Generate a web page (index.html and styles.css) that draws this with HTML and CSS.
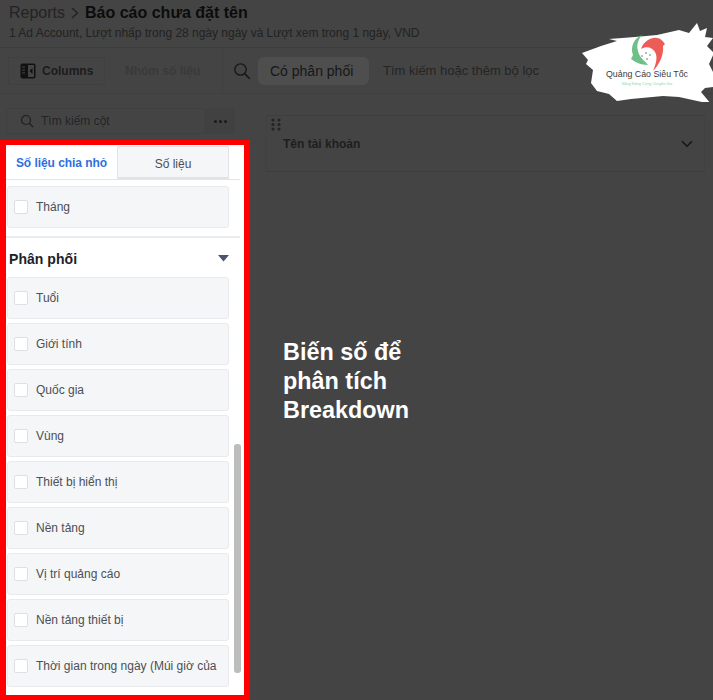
FILE: index.html
```html
<!DOCTYPE html>
<html lang="vi">
<head>
<meta charset="utf-8">
<title>Báo cáo chưa đặt tên</title>
<link rel="stylesheet" href="styles.css">
</head>
<body>
<div class="page">
  <header class="head">
    <div class="crumbs"><span class="crumb">Reports</span><svg class="sep" width="10" height="14" viewBox="0 0 10 14"><path d="M2 2l5.5 5L2 12" fill="none" stroke="#1f1f1f" stroke-width="1.2"/></svg><strong class="title">Báo cáo chưa đặt tên</strong></div>
    <div class="sub">1 Ad Account, Lượt nhấp trong 28 ngày ngày và Lượt xem trong 1 ngày, VND</div>
  </header>
  <div class="toolbar">
    <div class="btn btn-columns">
      <svg width="16" height="16" viewBox="0 0 16 16"><rect x="0.5" y="0.5" width="15" height="15" rx="2" fill="#111"/><rect x="8" y="2" width="6" height="12" fill="#444"/><path d="M12.5 5v6L9.5 8z" fill="#111"/><path d="M2 4h3M2 7h3M2 10h3" stroke="#444" stroke-width="1"/></svg>
      <span>Columns</span>
    </div>
    <div class="btn-muted">Nhóm số liệu</div>
    <div class="search-wrap">
      <svg width="18" height="18" viewBox="0 0 18 18"><circle cx="7.5" cy="7.5" r="5.7" fill="none" stroke="#161616" stroke-width="1.3"/><path d="M11.6 11.6l5.2 5.2" stroke="#161616" stroke-width="1.5"/></svg>
      <span class="chip">Có phân phối</span>
      <span class="filter">Tìm kiếm hoặc thêm bộ lọc</span>
    </div>
  </div>
  <div class="main">
    <aside class="side">
      <div class="side-search">
        <div class="search-box">
          <svg width="14" height="14" viewBox="0 0 14 14"><circle cx="6" cy="6" r="4.5" fill="none" stroke="#1e1e1e" stroke-width="1.2"/><path d="M9.3 9.3l3.8 3.8" stroke="#1e1e1e" stroke-width="1.3"/></svg>
          <span>Tìm kiếm cột</span>
        </div>
        <div class="more"><i></i><i></i><i></i></div>
      </div>
      <div class="panel">
        <div class="tabs">
          <div class="tab tab-on">Số liệu chia nhỏ</div>
          <div class="tab tab-off">Số liệu</div>
        </div>
        <div class="row first"><span class="check"></span>Tháng</div>
        <hr class="rule">
        <div class="group"><span>Phân phối</span><svg width="11" height="7" viewBox="0 0 11 7"><path d="M0 0h11L5.5 6.5z" fill="#4b5468"/></svg></div>
        <div class="rows">
          <div class="row"><span class="check"></span>Tuổi</div>
          <div class="row"><span class="check"></span>Giới tính</div>
          <div class="row"><span class="check"></span>Quốc gia</div>
          <div class="row"><span class="check"></span>Vùng</div>
          <div class="row"><span class="check"></span>Thiết bị hiển thị</div>
          <div class="row"><span class="check"></span>Nền tảng</div>
          <div class="row"><span class="check"></span>Vị trí quảng cáo</div>
          <div class="row"><span class="check"></span>Nền tảng thiết bị</div>
          <div class="row"><span class="check"></span>Thời gian trong ngày (Múi giờ của</div>
        </div>
        <div class="thumb"></div>
      </div>
    </aside>
    <section class="content">
      <div class="col-card">
        <svg class="grip" width="10" height="13" viewBox="0 0 10 13"><g fill="#242424"><circle cx="2" cy="2" r="1.6"/><circle cx="8" cy="2" r="1.6"/><circle cx="2" cy="6.5" r="1.6"/><circle cx="8" cy="6.5" r="1.6"/><circle cx="2" cy="11" r="1.6"/><circle cx="8" cy="11" r="1.6"/></g></svg>
        <div class="col-row">
          <span>Tên tài khoản</span>
          <svg width="12" height="8" viewBox="0 0 12 8"><path d="M1 1.2l5 5 5-5" fill="none" stroke="#161616" stroke-width="1.6"/></svg>
        </div>
      </div>
      <p class="note">Biến số để<br>phân tích<br>Breakdown</p>
    </section>
  </div>
  <svg class="logo" width="134" height="82" viewBox="0 0 134 82">
    <path d="M3 33L22 26 38 21 30 19 56 17 78 15 100 10 110 13 118 3 121 11 128 8 126 17 134 18 128 26 135 33 130 44 133 50 141 66 126 68 122 72 132 84 100 77 84 76 52 79 38 81 30 74 18 71 12 63 14 50 7 44 9 40z" fill="#fff"/>
    <path d="M63 15C55 18 51 27 54 35L52 39C56 42 62 45 69 45 66 41 62 39 60 34 57 27 58 21 63 15z" fill="#6cc088"/>
    <path d="M62 29C65 21 72 17 78 18 81 18 84 21 86 24L84 26C85 34 81 44 74 51 77 44 79 37 76 32 73 27 67 26 62 29z" fill="#ee5c58"/>
    <g fill="#a3a8a8"><circle cx="63" cy="36" r="1"/><circle cx="67" cy="33" r="1"/><circle cx="71" cy="35" r="1"/><circle cx="68" cy="39" r="1"/></g>
    <text class="logo-name" x="68" y="57" text-anchor="middle">Quảng Cáo Siêu Tốc</text>
    <text class="logo-tag" x="68" y="65" text-anchor="middle">Năng Động Cùng Chuyên Gia</text>
  </svg>
</div>
</body>
</html>
```
FILE: styles.css
```css
* { box-sizing: border-box; }
html, body { margin: 0; padding: 0; }
body { background: #444; font-family: "Liberation Sans", Arial, sans-serif; color: #1d1d1d; }
.page { position: relative; width: 713px; height: 700px; overflow: hidden; background: #444; display: flex; flex-direction: column; }

.head { height: 48px; padding: 3px 9px 0; border-bottom: 1px solid #3c3c3c; }
.crumbs { display: flex; align-items: center; height: 20px; font-size: 16px; }
.crumb { color: #232323; }
.sep { margin: 0 5px 0 5px; }
.title { color: #0c0c0c; font-weight: 700; }
.sub { margin-top: 2px; font-size: 12px; line-height: 16px; color: #222; letter-spacing: -.01px; }

.toolbar { height: 46px; display: flex; align-items: center; padding-left: 8px; border-bottom: 1px solid #3f3f3f; }
.btn { display: flex; align-items: center; gap: 6px; width: 97px; height: 28px; padding-left: 11px; border: 1px solid #404040; border-radius: 2px; font-size: 12px; font-weight: 700; color: #1c1c1c; }
.btn-muted { width: 117px; padding-left: 20px; font-size: 12px; font-weight: 700; color: #3a3a3a; }
.search-wrap { display: flex; align-items: center; height: 46px; padding-left: 10px; border-left: 1px solid #404040; font-size: 14px; }
.chip { margin-left: 7px; height: 28px; width: 111px; padding-left: 12px; line-height: 28px; background: #4e4e4e; border-radius: 6px; color: #161616; }
.filter { margin-left: 14px; font-size: 13px; color: #242424; }

.main { flex: 1; display: flex; min-height: 0; }
.side { width: 250px; display: flex; flex-direction: column; }
.side-search { height: 46px; padding: 14px 9px 0 6px; display: flex; }
.search-box { width: 199px; height: 26px; display: flex; align-items: center; gap: 7px; padding-left: 13px; border: 1px solid #404040; border-radius: 3px; font-size: 12px; color: #242424; }
.more { width: 30px; height: 26px; display: flex; align-items: center; justify-content: center; gap: 2px; background: #414141; border-radius: 2px; }
.more i { width: 3px; height: 3px; border-radius: 50%; background: #1a1a1a; }

.panel { position: relative; flex: 1; min-height: 0; background: #fff; border: 6px solid #fe0000; border-right-width: 6px; border-bottom-width: 5px; border-top-width: 5px; overflow: hidden; padding-right: 15px; }
.tabs { display: flex; height: 34px; margin-top: 1px; border-bottom: 1px solid #e4e5e8; margin-right: -11px; }
.tab { height: 33px; font-size: 12px; line-height: 34px; text-align: center; }
.tab-on { width: 111px; color: #2e6fe0; font-weight: 700; letter-spacing: -.05px; }
.tab-off { width: 112px; color: #4b4f56; background: #f5f6f7; border: 1px solid #e2e3e6; border-bottom-width: 2px; border-radius: 2px 2px 0 0; }

.row { display: flex; align-items: center; height: 42px; margin-left: 1px; padding-left: 6px; background: #f5f6f7; border: 1px solid #e9eaed; border-radius: 3px; font-size: 12px; color: #4b4f56; }
.row.first { margin-top: 6px; }
.check { flex: none; width: 14px; height: 14px; margin-right: 8px; background: #fff; border: 1px solid #dddfe2; border-radius: 2px; }
.rule { height: 2px; margin: 8px -11px 0 0; border: 0; background: #e9ebee; }
.group { display: flex; align-items: center; justify-content: space-between; height: 39px; padding: 2px 0 0 3px; font-size: 14px; font-weight: 700; color: #1d2129; letter-spacing: .05px; }
.rows { display: flex; flex-direction: column; gap: 4px; }
.thumb { position: absolute; left: 228px; top: 299px; width: 7px; height: 229px; background: #bdbdbd; border-radius: 3px; }

.content { flex: 1; padding: 21px 8px 0 16px; }
.col-card { position: relative; height: 57px; border-top: 1px solid #3e3e3e; border-bottom: 1px solid #3c3c3c; border-left: 1px solid #414141; border-right: 1px solid #414141; }
.grip { position: absolute; left: 4px; top: 2px; }
.col-row { display: flex; align-items: center; justify-content: space-between; height: 55px; padding: 0 11px 0 16px; font-size: 12px; font-weight: 700; color: #1e1e1e; }
.note { margin: 166px 0 0 17px; font-size: 23.4px; line-height: 29px; font-weight: 700; color: #fff; }

.logo { position: absolute; left: 579px; top: 20px; }
.logo-name { font-family: "Liberation Sans", Arial, sans-serif; font-size: 8.8px; fill: #3b3b3b; }
.logo-tag { font-family: "Liberation Sans", Arial, sans-serif; font-size: 3.8px; fill: #8fd6a8; }
```
